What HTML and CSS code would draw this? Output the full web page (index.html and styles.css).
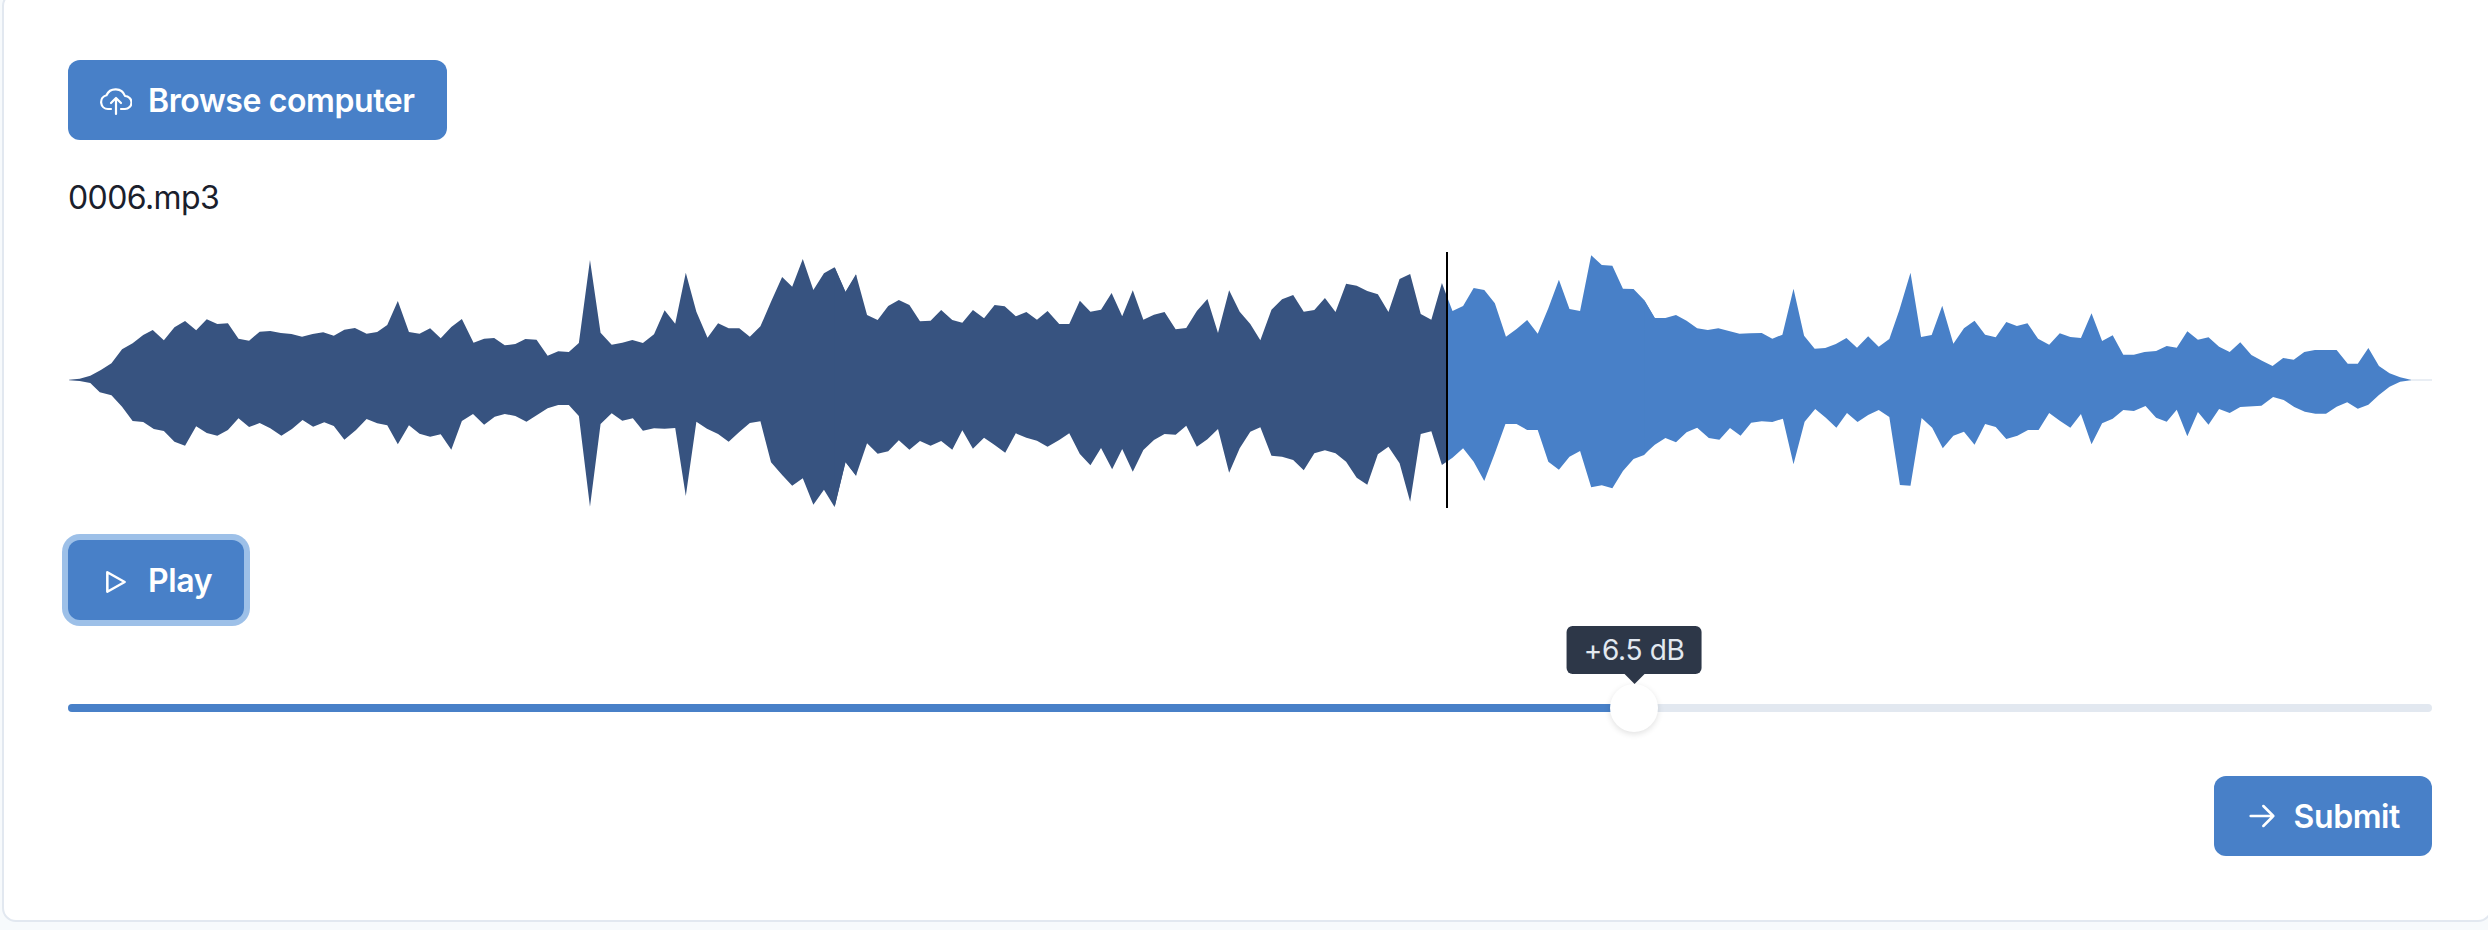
FILE: index.html
```html
<!DOCTYPE html>
<html lang="en">
<head>
    <meta charset="UTF-8">
    <meta name="viewport" content="width=device-width, initial-scale=1.0">
    <title>Audio gain</title>
    <link rel="stylesheet" href="styles.css">
</head>
<body>
    <div class="card">
        <button class="btn browse-btn">
            <svg class="btn-icon" viewBox="0 0 32 32">
                <path d="M11 25H8A7 7 0 0 1 6.5 11.2A10 10 0 0 1 25 12A6.5 6.5 0 0 1 25 25H21"/>
                <path d="M16 30V14M11 19L16 14L21 19"/>
            </svg>
            Browse computer
        </button>

        <div class="file-name">0006.mp3</div>

        <div class="wave-wrapper">
            <svg class="wave" viewBox="68 252 2364 256">
                <line class="wave-tail" x1="2410" y1="380" x2="2432" y2="380"/>
                <g transform="translate(40 230) scale(.52934 .33333)">
                    <polygon class="wave-played" points="55,449 75,446 95,437 115,420 135,400 155,358 175,340 195,315 213,300 234,331 254,292 274,273 295,301 315,268 335,282 355,280 375,326 395,332 415,305 435,303 455,309 475,312 495,320 515,312 535,307 555,317 575,299 595,294 617,311 637,306 656,285 676,213 697,306 717,311 737,295 757,325 777,291 797,267 819,338 839,326 858,324 878,346 898,342 917,327 938,329 959,377 979,364 999,366 1018,339 1039,90 1059,308 1080,344 1100,338 1119,330 1139,339 1160,313 1180,241 1200,281 1220,128 1240,245 1261,323 1281,280 1301,295 1321,295 1341,320 1361,289 1381,215 1402,141 1421,170 1441,87 1461,180 1481,130 1501,112 1522,186 1542,134 1542,737 1522,696 1501,831 1481,779 1461,824 1441,745 1421,767 1402,735 1381,697 1361,574 1341,579 1321,606 1301,635 1281,612 1260,596 1240,575 1220,798 1200,594 1180,596 1160,595 1139,602 1120,565 1100,572 1080,550 1059,582 1039,830 1018,558 999,525 979,525 959,535 939,555 919,575 898,558 878,552 859,560 839,584 818,552 797,573 777,659 757,613 737,620 717,611 697,586 676,643 656,586 637,580 617,567 597,600 575,629 555,588 537,577 516,590 496,570 476,597 456,617 435,595 415,579 395,591 375,565 355,600 335,617 315,609 295,589 274,647 254,635 234,603 215,597 195,576 175,573 155,530 135,496 113,487 95,459 75,453 55,451"/>
                </g>
                <g transform="translate(830 230) scale(.52934 .33333)">
                    <polygon class="wave-played" points="9,112 29,186 49,133 70,255 90,270 110,228 130,210 150,225 170,274 190,272 210,240 231,270 250,278 270,240 291,265 311,225 330,229 351,259 371,246 391,269 411,243 433,282 452,282 472,212 492,245 512,239 532,189 552,259 572,181 592,269 612,254 632,246 653,298 673,294 693,243 713,207 733,309 754,181 774,245 794,282 813,331 834,239 854,208 875,195 895,245 915,240 935,204 955,246 975,161 995,167 1015,183 1035,193 1055,246 1076,147 1096,132 1116,252 1136,269 1156,159 1165,197 1165,695 1156,705 1136,604 1116,612 1096,815 1076,700 1055,650 1035,673 1015,764 995,743 975,695 955,670 935,661 915,670 895,721 875,690 854,680 834,677 813,592 794,605 774,655 754,728 733,597 713,628 693,650 673,587 653,614 632,612 612,630 592,660 572,725 552,657 533,718 512,654 492,706 472,672 452,610 433,630 411,650 391,632 371,623 351,610 331,668 311,645 291,623 270,656 250,601 231,659 210,633 190,647 170,633 150,659 130,631 110,664 90,671 70,640 49,737 29,696 9,830"/>
                    <polygon class="wave-rest" points="1165,197 1176,243 1196,228 1216,174 1236,180 1256,220 1277,320 1297,297 1317,270 1337,311 1357,235 1377,149 1397,237 1417,243 1438,76 1458,105 1478,107 1498,176 1518,177 1538,210 1558,264 1558,640 1538,675 1518,687 1498,723 1478,775 1458,766 1438,772 1417,663 1397,680 1377,719 1357,695 1337,600 1317,600 1297,582 1276,582 1256,670 1236,753 1216,695 1196,655 1176,683 1165,695"/>
                </g>
                <g transform="translate(1640 230) scale(.52934 .33333)">
                    <polygon class="wave-rest" points="8,210 28,264 48,264 68,255 88,272 108,295 128,300 148,295 168,303 188,311 208,310 230,309 250,326 269,314 290,176 310,317 330,356 350,354 370,342 390,324 410,353 431,319 451,350 471,327 490,240 511,128 531,321 551,315 571,227 592,341 612,295 632,272 652,314 672,322 692,276 712,288 732,280 752,326 773,344 793,310 813,321 833,324 853,250 873,333 893,316 913,374 933,374 953,366 975,363 995,348 1014,353 1034,304 1054,329 1074,322 1094,350 1114,366 1134,337 1155,375 1175,392 1195,408 1215,384 1235,389 1255,366 1275,360 1316,360 1337,401 1356,401 1376,354 1396,408 1416,430 1436,442 1456,449 1456,451 1436,455 1416,470 1396,495 1376,524 1356,536 1336,517 1316,530 1296,551 1276,551 1256,545 1236,531 1216,510 1196,501 1174,527 1134,531 1114,549 1094,537 1074,584 1054,546 1034,619 1014,539 995,575 975,563 955,528 933,543 913,540 893,566 873,580 853,643 833,552 813,593 793,572 773,549 753,600 733,600 713,617 692,627 672,591 652,582 632,644 612,605 592,617 572,655 552,593 532,564 511,767 491,765 471,561 451,540 431,555 411,576 391,549 371,593 351,563 331,537 311,575 290,703 270,566 250,576 230,574 210,578 190,617 170,594 150,629 130,624 108,593 88,607 68,637 48,624 28,644 8,673"/>
                </g>
            </svg>
            <div class="wave-cursor"></div>
        </div>

        <button class="btn play-btn">
            <svg class="btn-icon" viewBox="0 0 24 24">
                <path d="M5.5 6.2L18.5 13.5L5.5 20.8Z"/>
            </svg>
            Play
        </button>

        <div class="slider">
            <div class="slider-fill" style="width: 66.25%">
                <div class="slider-thumb">
                    <div class="slider-tip">+6.5 dB</div>
                </div>
            </div>
        </div>

        <div class="actions">
            <button class="btn">
                <svg class="btn-icon" viewBox="0 0 24 24">
                    <path d="M3.5 12H20.5M13 4.5L20.5 12L13 19.5"/>
                </svg>
                Submit
            </button>
        </div>
    </div>
</body>
</html>
```

FILE: styles.css
```css
html, body {
    height: 100%;
}
body {
    margin: 0;
    padding-left: 2px;
    background-color: #f7fafc;
    color: #1a202c;
    font-family: Inter, "Liberation Sans", sans-serif;
    overflow: hidden;
}
.card {
    margin: -8px -4px 0 0;
    padding: 66px 58px 64px 64px;
    background-color: #fff;
    border: 2px solid #e2e8f0;
    border-radius: 14px;
}
.btn {
    display: inline-flex;
    align-items: center;
    gap: 16px;
    height: 80px;
    padding: 0 32px;
    background-color: #4880c8;
    color: #fff;
    border: none;
    border-radius: 12px;
    font-family: inherit;
    font-size: 32px;
    font-weight: 600;
    letter-spacing: -0.4px;
}
.btn-icon {
    width: 32px;
    height: 32px;
    fill: none;
    stroke: #fff;
    stroke-width: 1.9;
    stroke-linecap: round;
    stroke-linejoin: round;
}
.browse-btn {
    display: flex;
}
.browse-btn .btn-icon {
    stroke-width: 2.2;
}
.file-name {
    margin-top: 34px;
    font-size: 32px;
    line-height: 48px;
    letter-spacing: -0.6px;
}
.wave-wrapper {
    position: relative;
    margin-top: 30px;
}
.wave {
    display: block;
    width: 100%;
    height: 256px;
}
.wave-played {
    fill: #375380;
}
.wave-rest {
    fill: #4880c8;
}
.wave-tail {
    stroke: #e2e8f0;
    stroke-width: 1.5;
}
.wave-cursor {
    position: absolute;
    top: 0;
    left: 1378px;
    width: 2px;
    height: 256px;
    background-color: #000;
}
.play-btn {
    display: flex;
    margin-top: 32px;
    box-shadow: 0 0 0 6px #9dc0e8;
}
.slider {
    height: 8px;
    margin-top: 84px;
    background-color: #e2e8f0;
    border-radius: 4px;
}
.slider-fill {
    position: relative;
    height: 100%;
    background-color: #4880c8;
    border-radius: 4px;
}
.slider-thumb {
    position: absolute;
    top: -20px;
    right: -24px;
    width: 48px;
    height: 48px;
    background-color: #fff;
    border-radius: 50%;
    box-shadow: 0 2px 6px rgba(0, 0, 0, 0.12);
}
.slider-tip {
    position: absolute;
    bottom: 58px;
    left: 50%;
    transform: translateX(-50%);
    padding: 0 17px;
    line-height: 48px;
    background-color: #2d3748;
    color: #e2e8f0;
    border-radius: 6px;
    font-size: 28px;
    letter-spacing: -0.3px;
    white-space: nowrap;
}
.slider-tip::after {
    content: "";
    position: absolute;
    top: 100%;
    left: 50%;
    margin-left: -10px;
    border: 10px solid transparent;
    border-top-color: #2d3748;
    border-bottom: none;
}
.actions {
    display: flex;
    justify-content: flex-end;
    margin-top: 64px;
}
```
